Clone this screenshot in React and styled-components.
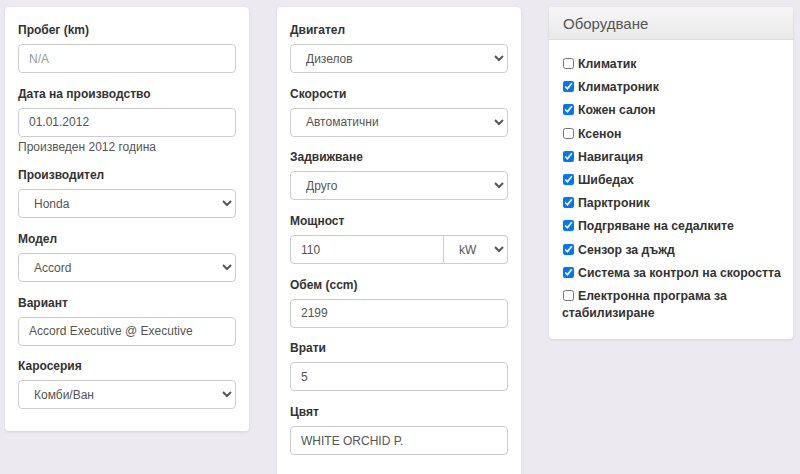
import React from 'react';
import styled, { createGlobalStyle } from 'styled-components';

const Global = createGlobalStyle`
  html, body {
    margin: 0;
    padding: 0;
    background: #ece9f0;
    font-family: "Liberation Sans", Arial, sans-serif;
    color: #333;
  }
`;

const Page = styled.div`
  display: flex;
  align-items: flex-start;
  gap: 28px;
  padding: 7px 5px 0;
  height: 474px;
  overflow: hidden;
  box-sizing: border-box;
`;

const Card = styled.div`
  width: 244px;
  box-sizing: border-box;
  background: #fff;
  border-radius: 4px;
  box-shadow: 0 1px 3px rgba(0, 0, 0, 0.1);
  padding: ${p => (p.$flush ? '0' : '15px 13px 22px')};
  min-height: ${p => (p.$tall ? '500px' : 'auto')};
`;

const Group = styled.div`
  margin-bottom: 12.7px;
  &:last-child { margin-bottom: 0; }
`;

const Label = styled.div`
  font-size: 12px;
  font-weight: bold;
  line-height: 17px;
  margin-bottom: 5px;
  color: #333;
`;

const Input = styled.input`
  display: block;
  width: 100%;
  height: 29px;
  box-sizing: border-box;
  border: 1px solid #ccc;
  border-radius: ${p => (p.$joined ? '4px 0 0 4px' : '4px')};
  padding: 0 10px;
  font-family: "Liberation Sans", Arial, sans-serif;
  font-size: 12px;
  color: #555;
  background: #fff;
  outline: none;
  &::placeholder { color: #999; }
`;

const Select = styled.select`
  display: block;
  width: ${p => p.$w || '100%'};
  flex: ${p => (p.$w ? 'none' : '1')};
  height: 29px;
  box-sizing: border-box;
  border: 1px solid #ccc;
  border-left-width: ${p => (p.$joined ? '0' : '1px')};
  border-radius: ${p => (p.$joined ? '0 4px 4px 0' : '4px')};
  padding: 0 8px 0 11px;
  font-family: "Liberation Sans", Arial, sans-serif;
  font-size: 12px;
  color: #555;
  background: #fff;
  outline: none;
`;

const InputRow = styled.div`
  display: flex;
`;

const Help = styled.div`
  font-size: 12px;
  line-height: 16px;
  color: #555;
  margin-top: 2px;
`;

const PanelHead = styled.div`
  height: 33px;
  box-sizing: border-box;
  padding: 0 14px;
  display: flex;
  align-items: center;
  font-size: 15px;
  color: #555;
  background: linear-gradient(#f6f6f6, #e9e9e9);
  border-bottom: 1px solid #ddd;
  border-radius: 4px 4px 0 0;
`;

const PanelBody = styled.div`
  padding: 16px 10px 17px 13px;
`;

const Check = styled.label`
  display: block;
  font-size: 12.3px;
  font-weight: bold;
  line-height: 17px;
  color: #333;
  margin-bottom: 6.2px;
  &:last-child { margin-bottom: 0; }
  input {
    margin: 0 4px 0 1px;
    width: 11px;
    height: 11px;
    vertical-align: -1px;
  }
`;

const Field = ({ label, children, help }) => (
  <Group>
    <Label>{label}</Label>
    {children}
    {help && <Help>{help}</Help>}
  </Group>
);

const Sel = ({ value, ...rest }) => (
  <Select defaultValue={value} {...rest}>
    <option>{value}</option>
  </Select>
);

const equipment = [
  ['Климатик', false],
  ['Климатроник', true],
  ['Кожен салон', true],
  ['Ксенон', false],
  ['Навигация', true],
  ['Шибедах', true],
  ['Парктроник', true],
  ['Подгряване на седалките', true],
  ['Сензор за дъжд', true],
  ['Система за контрол на скоростта', true],
  ['Електронна програма за стабилизиране', false],
];

export default function App() {
  return (
    <>
      <Global />
      <Page>
        <Card>
          <Field label="Пробег (km)">
            <Input placeholder="N/A" />
          </Field>
          <Field label="Дата на производство" help="Произведен 2012 година">
            <Input defaultValue="01.01.2012" />
          </Field>
          <Field label="Производител">
            <Sel value="Honda" />
          </Field>
          <Field label="Модел">
            <Sel value="Accord" />
          </Field>
          <Field label="Вариант">
            <Input defaultValue="Accord Executive @ Executive" />
          </Field>
          <Field label="Каросерия">
            <Sel value="Комби/Ван" />
          </Field>
        </Card>

        <Card $tall>
          <Field label="Двигател">
            <Sel value="Дизелов" />
          </Field>
          <Field label="Скорости">
            <Sel value="Автоматични" />
          </Field>
          <Field label="Задвижване">
            <Sel value="Друго" />
          </Field>
          <Field label="Мощност">
            <InputRow>
              <Input $joined defaultValue="110" />
              <Sel $joined $w="64px" value="kW" />
            </InputRow>
          </Field>
          <Field label="Обем (ccm)">
            <Input defaultValue="2199" />
          </Field>
          <Field label="Врати">
            <Input defaultValue="5" />
          </Field>
          <Field label="Цвят">
            <Input defaultValue="WHITE ORCHID P." />
          </Field>
        </Card>

        <Card $flush>
          <PanelHead>Оборудване</PanelHead>
          <PanelBody>
            {equipment.map(([name, on]) => (
              <Check key={name}>
                <input type="checkbox" defaultChecked={on} />
                {name}
              </Check>
            ))}
          </PanelBody>
        </Card>
      </Page>
    </>
  );
}
